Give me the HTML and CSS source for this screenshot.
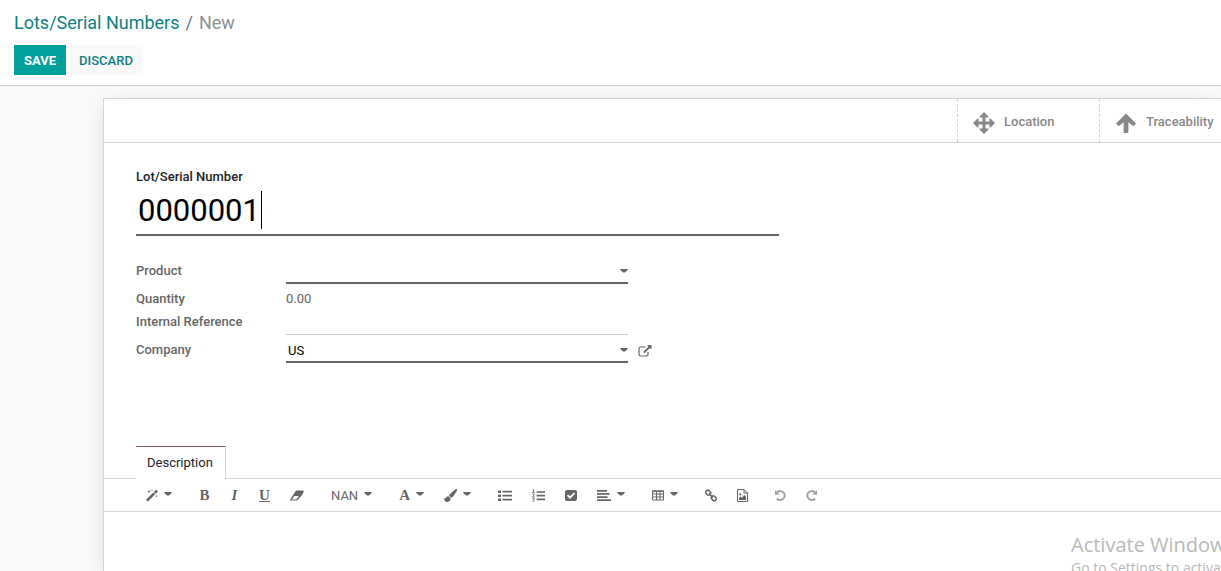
FILE: index.html
```html
<!DOCTYPE html>
<html lang="en">
<head>
<meta charset="utf-8">
<title>Lots/Serial Numbers - New</title>
<link rel="stylesheet" href="styles.css">
</head>
<body>
<svg class="defs" aria-hidden="true">
  <symbol id="caret" viewBox="0 0 8 4"><path d="M.3 0h7.400v1L5 3.500H3L.3 1z"/></symbol>
</svg>
<header class="control-panel">
  <nav class="breadcrumb" aria-label="Breadcrumb">
    <a href="#">Lots/Serial Numbers</a><span class="slash">/</span><span class="current">New</span>
  </nav>
  <div class="actions">
    <button class="btn primary" type="button">SAVE</button>
    <button class="btn secondary" type="button">DISCARD</button>
  </div>
</header>
<main class="content">
  <form class="sheet">
    <div class="button-box">
      <button class="stat" type="button">
        <svg class="stat-icon" viewBox="0 0 22 22"><path d="M11 0l4.500 4.500v1H12.500v4h4v-3h1L22 11l-4.500 4.500h-1v-3h-4v4h3v1L11 22l-4.500-4.500v-1h3v-4h-4v3h-1L0 11l4.500-4.500h1v3h4v-4h-3v-1z"/></svg>
        <span>Location</span>
      </button>
      <button class="stat" type="button">
        <svg class="stat-icon" viewBox="0 0 22 22"><path d="M11 1.500l10 10-2.600 2.700-5-4V20q0 1-1 1H9.600q-1 0-1-1v-9.800l-5 4L1 11.500z"/></svg>
        <span>Traceability</span>
      </button>
    </div>
    <div class="body">
      <div class="title">
        <label for="lot">Lot/Serial Number</label>
        <div class="title-field">
          <input id="lot" type="text" value="0000001">
          <span class="text-cursor"></span>
        </div>
      </div>
      <div class="fields">
        <div class="row product">
          <label for="product">Product</label>
          <div class="field required"><select id="product"><option></option></select><svg class="caret"><use href="#caret"/></svg></div>
        </div>
        <div class="row quantity">
          <label for="quantity">Quantity</label>
          <output id="quantity">0.00</output>
        </div>
        <div class="row reference">
          <label for="reference">Internal Reference</label>
          <div class="field"><input id="reference" type="text"></div>
        </div>
        <div class="row company">
          <label for="company">Company</label>
          <div class="field required"><select id="company"><option>US</option></select><svg class="caret"><use href="#caret"/></svg></div>
          <button class="external" type="button" aria-label="External link">
            <svg viewBox="0 0 14 12"><path d="M7.500 2H2.500Q1 2 1 3.500v6Q1 11 2.500 11h6Q10 11 10 9.500V7" fill="none" stroke="currentColor" stroke-width="1.200"/><path d="M9 0h4.500v4.500L12 3 6.500 8.300 5.200 7 10.500 1.500z"/></svg>
          </button>
        </div>
      </div>
    </div>
    <div class="tabs"><button class="tab" type="button">Description</button></div>
    <div class="toolbar">
      <div class="group">
        <button type="button" aria-label="Style"><svg class="w12" viewBox="0 0 12 12"><path d="M0 10.300L7.300 3 9.200 4.700 1.900 12zM7.900 2.400L10.200.1 12 1.900 9.700 4.200zM3 .3l.5 1.200 1.200.5-1.200.5L3 3.700l-.5-1.200L1.300 2l1.200-.5zM6 0l.3.700.7.3-.7.3L6 2l-.3-.7L5 1l.7-.3zM10.500 5.500l.4.700.7.3-.7.400-.4.700-.4-.7-.7-.4.700-.3z"/></svg><svg class="caret"><use href="#caret"/></svg></button>
      </div>
      <div class="group serif">
        <button type="button"><b class="w11">B</b></button>
        <button type="button"><i class="w9">I</i></button>
        <button type="button"><u class="w11">U</u></button>
        <button type="button" aria-label="Remove format"><svg class="w14" viewBox="0 0 14 12"><path fill-rule="evenodd" d="M6 1h7q1 0 .7 1L12.500 5 8 10.300Q7.500 11 6.500 11H1Q-.2 11 .2 9.900zM1.800 9.900h4.500l2.600-3.400H4.500z"/></svg></button>
      </div>
      <div class="group">
        <button type="button"><span>NAN</span><svg class="caret"><use href="#caret"/></svg></button>
      </div>
      <div class="group serif">
        <button type="button"><b class="w11">A</b><svg class="caret"><use href="#caret"/></svg></button>
        <button type="button" aria-label="Background color"><svg class="w13" viewBox="0 0 13 13"><path d="M12.700.3q.6.600 0 1.900L9 7.600Q8 8.800 6.900 8.600L5.200 7q-.1-1 .8-2L11.200.4q.8-.6 1.500-.1zM4.500 7.300l2 1.900q.2 3.700-3.300 3.700Q.4 12.900 0 9l1.500.6Q2 7.200 4.500 7.300z"/></svg><svg class="caret"><use href="#caret"/></svg></button>
      </div>
      <div class="group">
        <button type="button" aria-label="Unordered list"><svg class="w14" viewBox="0 0 14 12"><path d="M0 1h3v2.400H0zM0 5h3v2.400H0zM0 9h3v2.400H0zM4.500 1.300H14V3H4.500zM4.500 5.300H14V7H4.500zM4.500 9.300H14V11H4.500z"/></svg></button>
        <button type="button" aria-label="Ordered list"><svg class="w13" viewBox="0 0 14 14"><path d="M5 2.300h9V4H5zM5 6.300h9V8H5zM5 10.300h9V12H5z"/><path d="M.5 1.300L1.700.5v3.200M.3 3.800h2.500M.4 5.700Q2.500 4.700 2.500 6.200L.5 8.500h2.300M.4 10h2L1.300 11.400q1.400 0 1.300 1T.3 13.300" fill="none" stroke="currentColor" stroke-width=".9"/></svg></button>
        <button type="button" aria-label="Checklist"><svg class="w12" viewBox="0 0 12 12"><path fill-rule="evenodd" d="M2 .5h8q2 0 2 2v7q0 2-2 2H2q-2 0-2-2v-7q0-2 2-2zM1.800 6.200L5 9.400l5.200-5.200L8.900 2.900 5 6.800 3.100 4.900z"/></svg></button>
        <button type="button" aria-label="Paragraph"><svg class="w14" viewBox="0 0 14 12"><path d="M0 .5h10v1.700H0zM0 3.600h12.500v1.700H0zM0 6.700h10.500v1.700H0zM0 9.800h14v1.700H0z"/></svg><svg class="caret"><use href="#caret"/></svg></button>
      </div>
      <div class="group">
        <button type="button" aria-label="Table"><svg class="w12" viewBox="0 0 12 12"><path d="M.5 1.500h11v9H.5zM.5 4.500h11M.5 7.500h11M4.500 1.500v9M8 1.500v9" fill="none" stroke="currentColor"/><path d="M0 1h12v1.300H0z"/></svg><svg class="caret"><use href="#caret"/></svg></button>
      </div>
      <div class="group">
        <button type="button" aria-label="Link"><svg class="w12" viewBox="0 0 12 12"><g fill="none" stroke="currentColor" stroke-width="1.500"><rect x="-2.500" y="-2" width="5" height="4" rx="1.600" transform="translate(3.200 3.200) rotate(45)"/><rect x="-2.500" y="-2" width="5" height="4" rx="1.600" transform="translate(8.800 8.800) rotate(45)"/><path d="M4 4l4 4"/></g></svg></button>
        <button type="button" aria-label="Picture"><svg class="w11" viewBox="0 0 11 13"><path d="M.5.500h6.500l3.500 3.500v8.500H.5zM7 .5V4h3.500" fill="none" stroke="currentColor"/><path d="M2 11V9l1.500-1.500L4.700 8.700 7.300 6 9 7.700V11z"/><circle cx="3.200" cy="5.300" r="1.100"/></svg></button>
      </div>
      <div class="group disabled">
        <button type="button" aria-label="Undo"><svg class="w11" viewBox="0 0 11 12"><path d="M1.500 3.500Q3 1.500 5.200 1.500A4.500 4.500 0 1 1 1.800 9" fill="none" stroke="currentColor" stroke-width="2"/><path d="M0 .5V5.200H4.700z"/></svg></button>
        <button type="button" aria-label="Redo"><svg class="w11" viewBox="0 0 11 12"><path d="M9.500 3.500Q8 1.500 5.800 1.500A4.500 4.500 0 1 0 9.200 9" fill="none" stroke="currentColor" stroke-width="2"/><path d="M11 .5V5.200H6.300z"/></svg></button>
      </div>
    </div>
    <div class="editor"></div>
  </form>
</main>
<aside class="watermark">
  <p class="watermark-title">Activate Windows</p>
  <p class="watermark-text">Go to Settings to activate Windows.</p>
</aside>
</body>
</html>
```
FILE: styles.css
```css
* { box-sizing: border-box; }
html, body { height: 100%; }
body {
  margin: 0;
  display: flex;
  flex-direction: column;
  position: relative;
  overflow: hidden;
  background: #f9f9f9;
  color: #666;
  font: 13px/20px Roboto, sans-serif;
}
button, input, select {
  margin: 0;
  padding: 0;
  border: 0;
  border-radius: 0;
  background: none;
  color: inherit;
  font: inherit;
  outline: 0;
}
svg { display: block; flex: none; fill: currentColor; }
.defs { position: absolute; width: 0; height: 0; }

.control-panel {
  padding: 10px 14px;
  border-bottom: 1px solid #ccc;
  background: #fff;
}
.breadcrumb { display: flex; gap: 6px; font-size: 18px; line-height: 25px; }
.breadcrumb a { color: #0d7f83; text-decoration: none; }
.breadcrumb .slash { color: #6c757d; }
.breadcrumb .current { color: #8f8f8f; }
.actions { display: flex; gap: 3px; margin-top: 10px; }
.btn { height: 30px; padding: 2px 10px 0; font-weight: 500; }
.btn.primary { background: #00a09d; color: #fff; font-weight: 700; }
.btn.secondary { background: #f9f9f9; color: #0d7f83; }

.content { display: flex; flex: 1; padding: 12px 0 0 103px; }
.sheet {
  display: flex;
  flex: 1;
  flex-direction: column;
  min-width: 0;
  border: 1px solid #ced4da;
  border-width: 1px 0 0 1px;
  background: #fff;
  box-shadow: 0 5px 20px -8px rgba(0, 0, 0, .3);
}
.button-box {
  display: flex;
  justify-content: flex-end;
  height: 44px;
  border-bottom: 1px solid #ced4da;
}
.stat {
  display: flex;
  align-items: center;
  gap: 9px;
  width: 142px;
  padding: 2px 15px 0;
  border-left: 1px dashed #ced4da;
  color: #888;
  font-weight: 500;
}
.stat:last-child { margin-right: -20px; }
.stat-icon { width: 22px; height: 22px; margin-top: 2px; }

.body { padding: 24px 32px 0; }
.title { width: 643px; max-width: 100%; }
.title label { display: block; color: #212529; font-weight: 500; }
.title-field { position: relative; }
.title input {
  display: block;
  width: 100%;
  height: 49px;
  padding: 0 2px;
  border-bottom: 2px solid #666;
  color: #000;
  font-size: 31px;
}
.text-cursor { position: absolute; top: 4px; left: 125px; width: 1px; height: 38px; background: #000; }

.fields { display: grid; gap: 4px; margin-top: 22px; }
.row { display: grid; grid-template-columns: 150px 342px auto; align-items: stretch; }
.row label { align-self: center; font-weight: 500; }
.row output { align-self: center; }
.product { height: 26px; }
.quantity { height: 22px; }
.reference { height: 21px; }
.company { height: 24px; }
.reference label, .company label { align-self: end; padding-bottom: 5px; line-height: 16px; }
.field { position: relative; display: flex; border-bottom: 1px solid #ccc; }
.field.required { border-bottom: 2px solid #666; }
.field input, .field select { width: 100%; color: #000; appearance: none; }
.field input { height: 20px; }
.field select { padding: 2px 0 0 2px; }
.caret { width: 8px; height: 4px; }
.field .caret { position: absolute; right: 0; bottom: 9px; }
.external { justify-self: start; margin-left: 10px; }
.external svg { width: 14px; height: 12px; }

.tabs {
  display: flex;
  margin-top: 83px;
  padding-left: 32px;
  border-bottom: 1px solid #ced4da;
}
.tab {
  height: 33px;
  margin-bottom: -1px;
  padding: 0 12px 0 11px;
  border-top: 1px solid #7c5a6b;
  border-right: 1px solid #ced4da;
  background: #fff;
  color: #212529;
}
.toolbar {
  display: flex;
  gap: 7px;
  padding-left: 32px;
  height: 33px;
  border-bottom: 1px solid #ced4da;
}
.group { display: flex; }
.group button { display: flex; align-items: center; gap: 6px; padding: 0 10px; }
.group span { padding-top: 2px; }
.group b, .group i, .group u { font-family: "Liberation Serif", serif; font-size: 15px; font-weight: 700; text-align: center; }
.group .caret { width: 8px; margin-bottom: 3px; }
.disabled { color: #a3a3a3; }
.w9 { width: 9px; }
.w11 { width: 11px; }
.w12 { width: 12px; }
.w13 { width: 13px; }
.w14 { width: 14px; }
.group svg { height: 13px; }
.group svg.caret { height: 4px; }
.editor { flex: 1; }

.watermark {
  position: absolute;
  right: 0;
  bottom: -7px;
  width: 150px;
  overflow: hidden;
  color: #b9b9b9;
  font-family: "Open Sans", sans-serif;
  white-space: nowrap;
}
.watermark p { margin: 0; }
.watermark-title { font-size: 20px; line-height: 26px; }
.watermark-text { font-size: 14px; line-height: 20px; }
```
